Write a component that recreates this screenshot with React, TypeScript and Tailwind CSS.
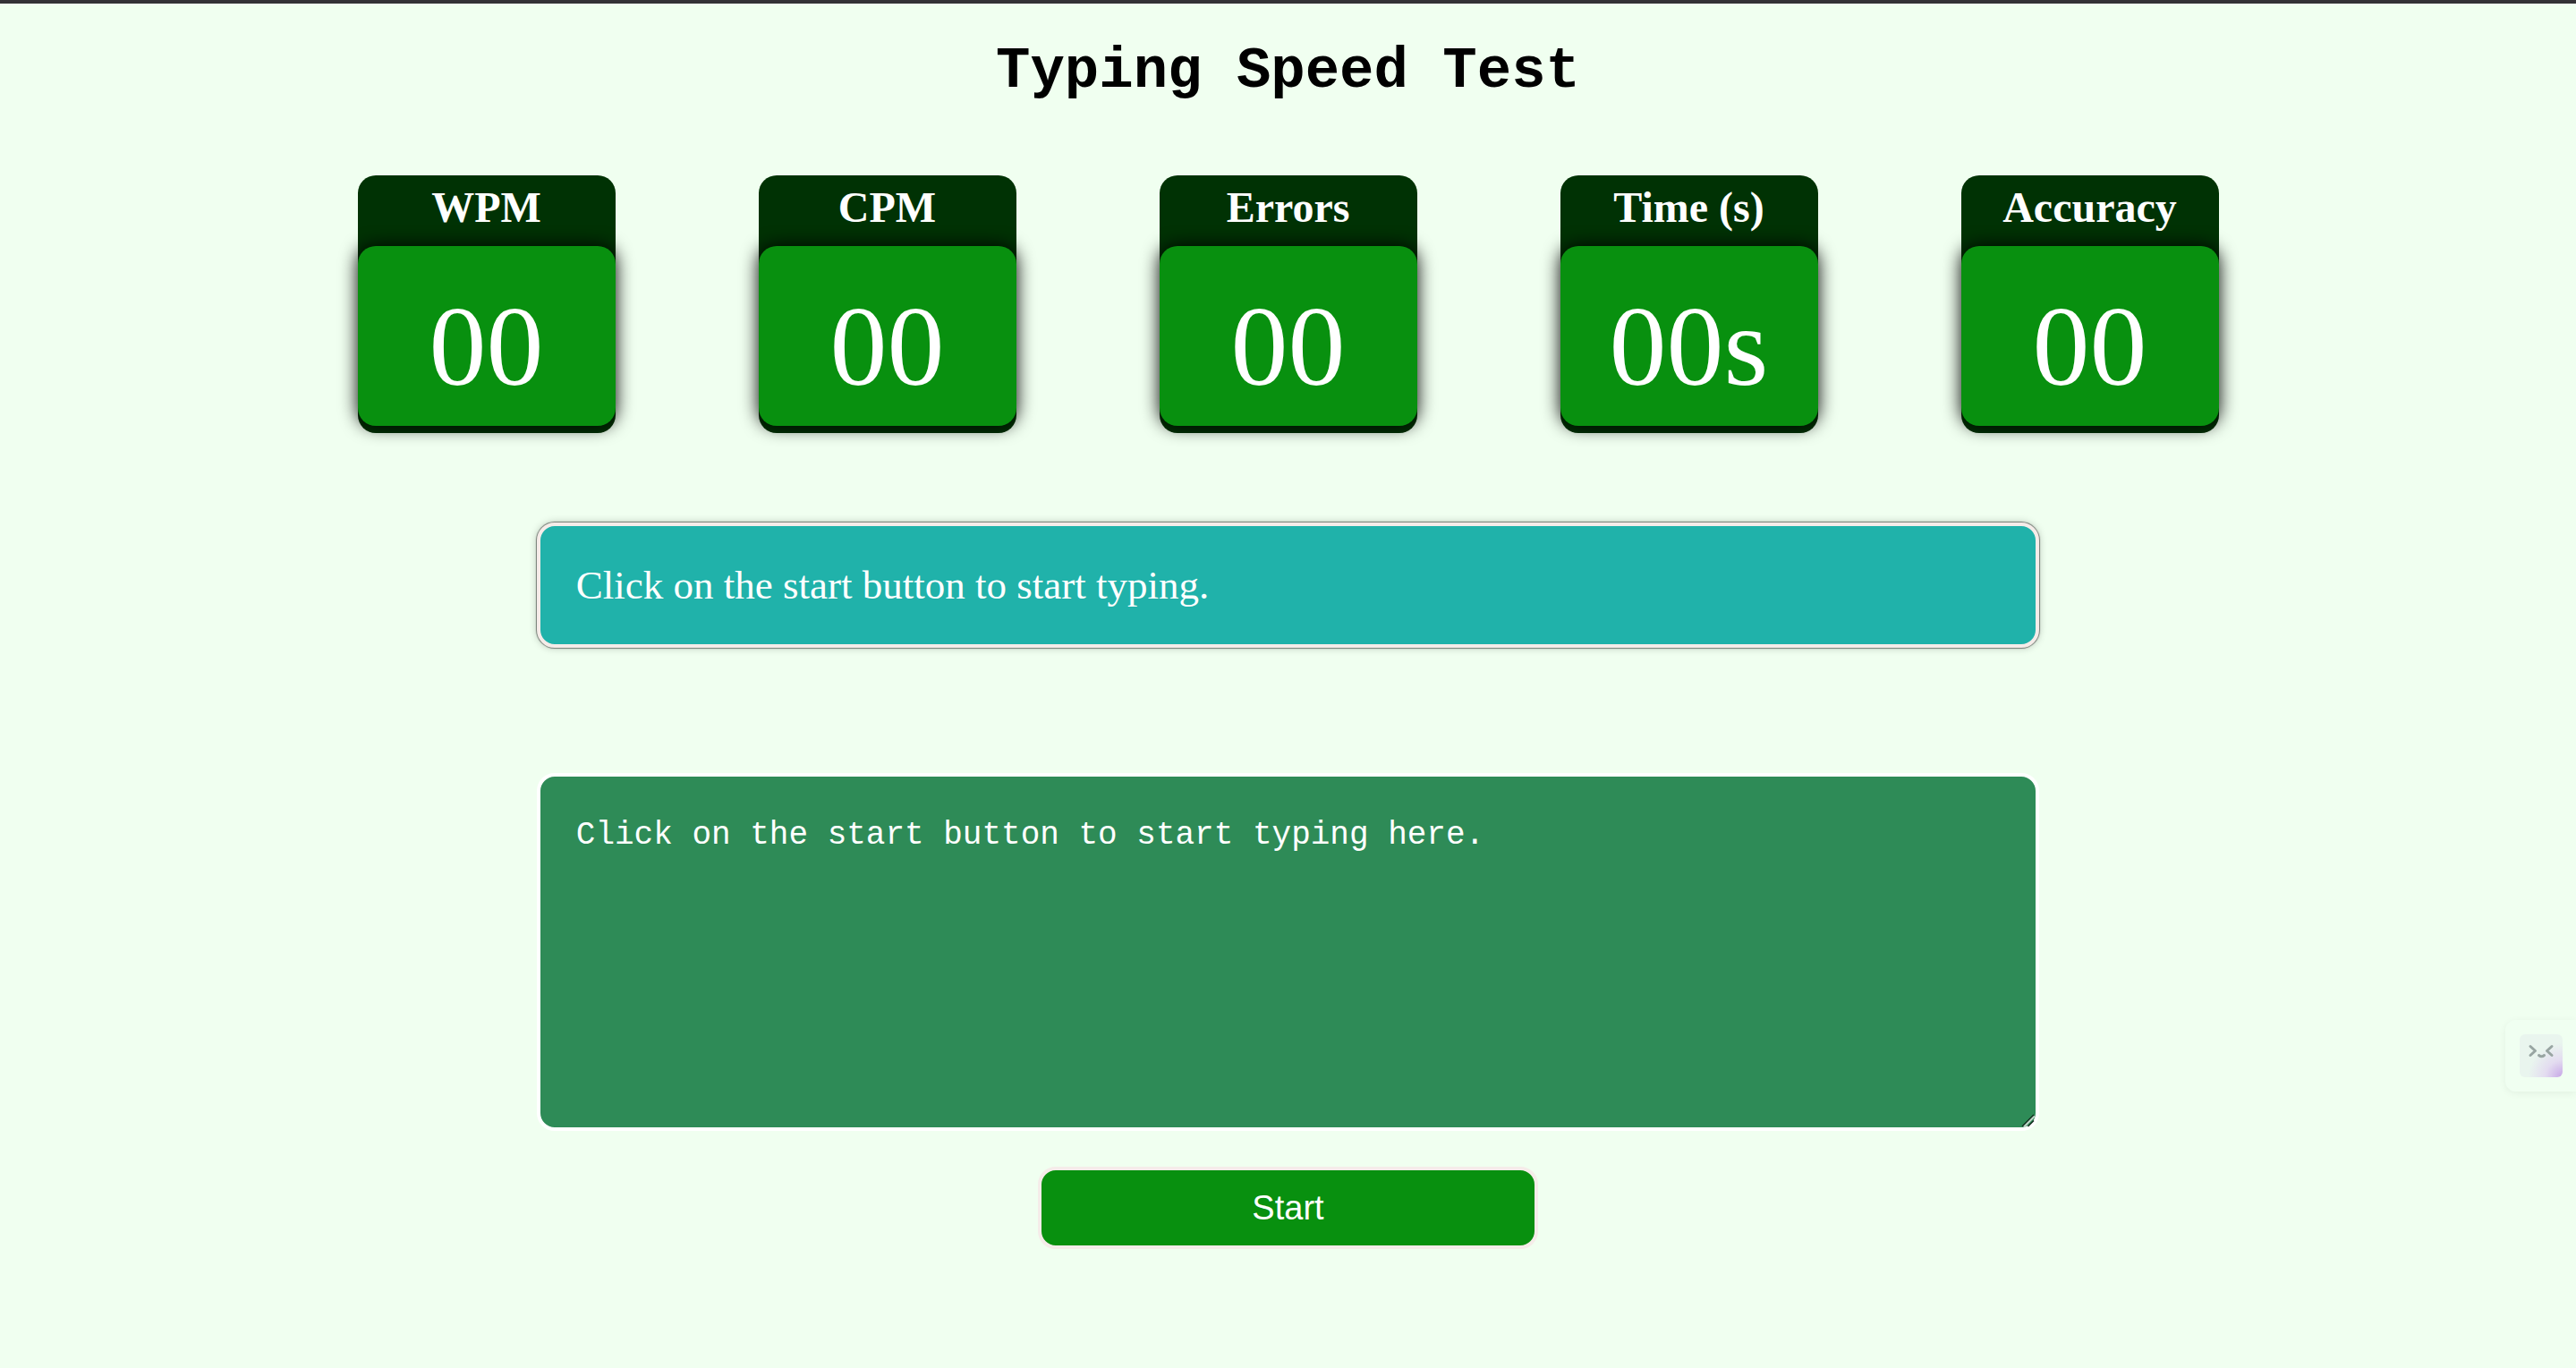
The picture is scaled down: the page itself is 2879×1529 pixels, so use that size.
const stats = [
  { label: "WPM", value: "00" },
  { label: "CPM", value: "00" },
  { label: "Errors", value: "00" },
  { label: "Time (s)", value: "00s" },
  { label: "Accuracy", value: "00" },
];

function StatCard({ label, value }: { label: string; value: string }) {
  return (
    <section className="w-72 rounded-[20px] bg-[#003204] pt-2 pb-2 text-center text-white">
      <h2 className="h-[71px] text-5xl leading-[56px] font-bold">{label}</h2>
      <p className="rounded-[20px] bg-[#08900f] pt-[38px] pb-[14px] text-[128px] leading-[149px] shadow-[0_0_20px_black]">
        {value}
      </p>
    </section>
  );
}

function ResizeGrip() {
  return (
    <svg
      className="pointer-events-none absolute right-1 bottom-1 size-4"
      viewBox="0 0 16 16"
      fill="none"
      aria-hidden="true"
    >
      <path d="M1 15L14 2" stroke="#10291b" strokeWidth="1.5" />
      <path d="M3 15.500L15 3.500" stroke="#c3d3ca" strokeWidth="2" />
      <path d="M7.500 15L14 8.500" stroke="#10291b" strokeWidth="1.5" />
    </svg>
  );
}

function AssistantTab() {
  return (
    <button
      type="button"
      aria-label="Open assistant"
      className="fixed top-[1140px] right-0 rounded-l-xl bg-[#f0fff1] py-4 pr-[15px] pl-4 shadow-[0_2px_8px_rgba(0,0,0,0.06)]"
    >
      <svg className="size-12" viewBox="0 0 48 48" fill="none">
        <defs>
          <radialGradient id="tint" cx="1" cy="1" r="0.8">
            <stop offset="0" stopColor="#c6a6e6" />
            <stop offset="0.5" stopColor="#e3dcf0" />
            <stop offset="1" stopColor="#e9f5ee" />
          </radialGradient>
        </defs>
        <rect width="48" height="48" rx="6" fill="url(#tint)" />
        <g stroke="#98a5a2" strokeWidth="3" strokeLinecap="round" strokeLinejoin="round">
          <path d="M12 13.500l5.500 5-5.500 5" />
          <path d="M36 13.500l-5.500 5 5.500 5" />
          <path d="M21.500 23.500q3 2.500 6 0" />
        </g>
      </svg>
    </button>
  );
}

export default function App() {
  return (
    <div className="min-h-screen border-t-4 border-[#343236] bg-[#f0fff0] font-['Liberation_Serif',serif]">
      <main className="flex flex-col items-center pt-10">
        <h1 className="font-['Courier_New','Liberation_Mono',monospace] text-[64px] leading-[72px] font-bold text-black">
          Typing Speed Test
        </h1>
        <div className="mt-20 flex gap-40">
          {stats.map((s) => (
            <StatCard key={s.label} {...s} />
          ))}
        </div>
        <div className="mt-[100px] flex w-7/12 flex-col items-center">
          <p className="w-full rounded-[20px] border-4 border-[#f5ece9] bg-[#20b2aa] p-10 text-[45px] leading-[52px] text-white shadow-[0_0_1px_1px_rgba(0,0,0,0.45),0_0_8px_rgba(0,0,0,0.25)]">
            Click on the start button to start typing.
          </p>
          <div className="relative mt-[140px] w-full">
            <textarea
              aria-label="Typing area"
              placeholder="Click on the start button to start typing here."
              className="block h-[400px] w-full resize-none rounded-[20px] border-4 border-white bg-[#2e8b57] px-10 py-10 font-['Liberation_Mono',monospace] text-4xl leading-[52px] text-white placeholder:text-white"
            />
            <ResizeGrip />
          </div>
          <button
            type="button"
            className="mt-10 w-1/3 rounded-[20px] border-4 border-[#f5ece9] bg-[#08900f] py-5 font-['Liberation_Sans',sans-serif] text-[38px] leading-[44px] text-white"
          >
            Start
          </button>
        </div>
      </main>
      <AssistantTab />
    </div>
  );
}
